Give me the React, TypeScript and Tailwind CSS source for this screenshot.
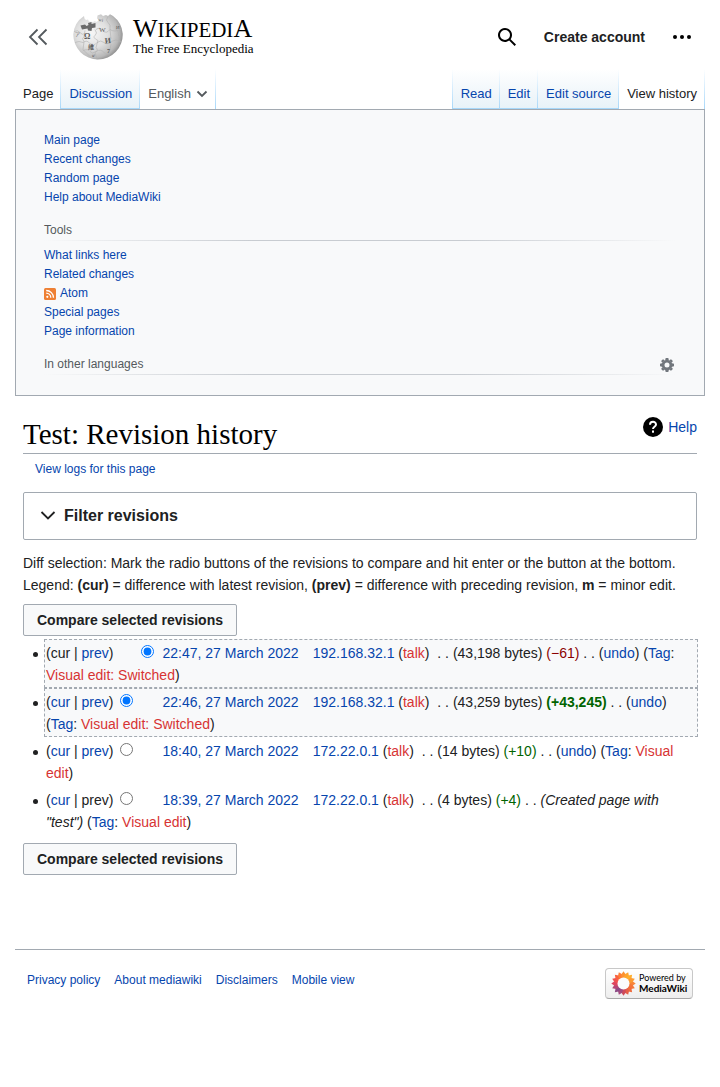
import type { ReactNode } from 'react';

const LINK = 'text-[#0645ad] hover:underline';
const RED = 'text-[#d73333] hover:underline';

function A({ children, className = LINK }: { children: ReactNode; className?: string }) {
  return (
    <a href="#" className={className}>
      {children}
    </a>
  );
}

function Globe() {
  return (
    <svg width="50" height="50" viewBox="0 -1.500 50 50" aria-hidden="true">
      <defs>
        <radialGradient id="globe" cx="38%" cy="42%" r="64%">
          <stop offset="0" stopColor="#f6f6f6" />
          <stop offset="0.5" stopColor="#e0e0e0" />
          <stop offset="0.85" stopColor="#b8b8b8" />
          <stop offset="1" stopColor="#8c8c8c" />
        </radialGradient>
      </defs>
      <path
        d="M11 2.600 L11.500 5 L13 6.500 L15 6 L16 8 L20 8.500 L22 7.500 L23 8.500 L26 7 L24 5 L24.500 2 L28 .8 L30 2.500 L33 1.500 L35 2.500 L37 .8 L40 2.500 A24.700 24.700 0 0 1 49.700 20 A24.800 24.800 0 0 1 25 46 A24.800 24.800 0 0 1 .3 21 A24 24 0 0 1 11 2.600Z"
        fill="url(#globe)"
      />
      <path
        d="M7.500 12 L12 11 L13.500 12.500 L15.500 11.500 L15 9.500 L18.500 8.500 L18.500 10.500 L22.500 9.500 L22.500 14 L19 14.500 L18.500 17.500 L15 17 L14.500 15 L9 16Z"
        fill="#6b6b6b"
      />
      <g fill="none" stroke="#b0b0b0" strokeWidth="0.600">
        <path d="M1 18 Q5 16 7 19 T12 20 M12 17 L11 23 Q8 25 11 28 L10 36 L17 43 M22 16 Q25 20 22 22 T25 27 L23 34 Q26 37 22 39 L24 46 M35 3 Q32 7 35 9 T37 16 L38 25 Q34 28 38 31 L36 42 M45 10 Q41 15 45 18 L47 29" />
        <path d="M2 29 Q6 27 10 29 Q14 26 17 30 T24 29 Q28 26 31 29 T38 28 Q43 25 48 28 M23 16 Q27 13 30 17 T37 16 Q41 19 48 16 M10 37 Q15 35 17 38 T23 38 Q28 35 31 39 T39 38" />
      </g>
      <g fill="#5c5c5c" fontFamily="Liberation Serif, Noto Sans CJK SC, serif" fontWeight="700">
        <text x="11" y="25" fontSize="8">Ω</text>
        <text x="26" y="18" fontSize="7" fontWeight="400">W</text>
        <text x="32" y="30" fontSize="8" transform="rotate(-6 32 30)">И</text>
        <text x="15" y="35" fontSize="6">維</text>
        <text x="34" y="39" fontSize="6">7</text>
        <text x="43" y="15" fontSize="5" fontWeight="400">И</text>
        <text x="2" y="22" fontSize="5" fontWeight="400">ア</text>
        <text x="25" y="7.500" fontSize="5" fontWeight="400" transform="rotate(12 25 7)">wi</text>
        <text x="19" y="43" fontSize="4">ש</text>
      </g>
    </svg>
  );
}

const PETALS = [
  '#f8853a', '#f4763a', '#ee6a3c', '#e75d45', '#cf4a5a', '#a34a7c', '#8d4a86', '#b34778',
  '#dd4560', '#f05050', '#f8613f', '#fd7c35', '#fd9130', '#fea42c', '#ffae2c', '#fc9a32',
];

function PoweredBy() {
  return (
    <a
      href="#"
      className="flex h-[31px] w-22 items-center gap-[3px] rounded-[4px] border border-[#c8c8c8] border-b-[#a8a8a8] bg-linear-to-b from-white to-[#eeeeee] pl-[5px] text-black"
    >
      <svg width="25" height="25" viewBox="-12.500 -12.500 25 25" className="shrink-0" aria-hidden="true">
        {PETALS.map((c, i) => (
          <path key={i} d="M5 -2 L9 -2.200 L12.200 0 L9 2.200 L5 2Z" fill={c} transform={`rotate(${i * 22.5})`} />
        ))}
        <circle r="6" fill="#fbfbfb" />
      </svg>
      <span className="whitespace-nowrap font-[Lato,sans-serif] text-[9px] leading-[10px]">
        Powered by
        <br />
        <b className="text-[10px] font-bold">MediaWiki</b>
      </span>
    </a>
  );
}

function Tab({ label, first = false, kind = 'link' }: { label: string; first?: boolean; kind?: 'link' | 'active' | 'menu' }) {
  const line = 'w-px self-stretch bg-linear-to-t from-[#a7d7f9] to-white';
  const base = 'flex flex-1 items-end gap-[5px] px-2 pb-[5px] text-[13px] leading-5 whitespace-nowrap';
  const fill = 'bg-[linear-gradient(to_top,#a7d7f9_0,#a7d7f9_1px,#e8f2f8_1px,#ffffff_100%)] text-[#0645ad]';
  return (
    <li className="flex h-10">
      {first && <span className={`${line} -ml-px`} />}
      {kind === 'menu' ? (
        <button type="button" className={`${base} text-[#54595d]`}>
          {label}
          <svg width="12" height="20" viewBox="0 0 12 20" fill="none" stroke="#54595d" strokeWidth="1.800" aria-hidden="true">
            <path d="M1.500 7.500 L6 12 L10.500 7.500" />
          </svg>
        </button>
      ) : (
        <a href="#" className={`${base} ${kind === 'active' ? 'text-[#202122]' : fill}`}>
          {label}
        </a>
      )}
      <span className={`${line} -ml-px`} />
    </li>
  );
}

function SideHeading({ children }: { children: ReactNode }) {
  return (
    <>
      <h2 className="flex h-[19px] items-center text-[#54595d]">{children}</h2>
      <div className="h-px bg-[linear-gradient(to_right,rgba(200,204,209,0)_0,#c8ccd1_33%,#c8ccd1_66%,rgba(200,204,209,0)_100%)]" />
    </>
  );
}

function CompareButton() {
  return (
    <button
      type="submit"
      className="block h-8 rounded-[2px] border border-[#a2a9b1] bg-[#f8f9fa] px-[13px] text-sm leading-5 font-bold text-[#202122]"
    >
      Compare selected revisions
    </button>
  );
}

type Revision = {
  cur: boolean;
  prev: boolean;
  radio: 'oldid' | 'diff';
  checked?: boolean;
  date: string;
  user: string;
  size: string;
  delta: string;
  deltaClass: string;
  undo: boolean;
  comment?: string;
  tag: string;
  box: string;
};

const SELECTED = 'border border-dashed border-[#a2a9b1] bg-[#f8f9fa]';
const PLAIN = 'border border-transparent';

const REVISIONS: Revision[] = [
  { cur: false, prev: true, radio: 'diff', checked: true, date: '22:47, 27 March 2022', user: '192.168.32.1', size: '43,198', delta: '−61', deltaClass: 'text-[#8b0000]', undo: true, tag: 'Visual edit: Switched', box: SELECTED },
  { cur: true, prev: true, radio: 'oldid', checked: true, date: '22:46, 27 March 2022', user: '192.168.32.1', size: '43,259', delta: '+43,245', deltaClass: 'font-bold text-[#006400]', undo: true, tag: 'Visual edit: Switched', box: SELECTED },
  { cur: true, prev: true, radio: 'oldid', date: '18:40, 27 March 2022', user: '172.22.0.1', size: '14', delta: '+10', deltaClass: 'text-[#006400]', undo: true, tag: 'Visual edit', box: PLAIN },
  { cur: true, prev: false, radio: 'oldid', date: '18:39, 27 March 2022', user: '172.22.0.1', size: '4', delta: '+4', deltaClass: 'text-[#006400]', undo: false, comment: 'Created page with "test"', tag: 'Visual edit', box: PLAIN },
];

function RevisionRow({ r }: { r: Revision }) {
  return (
    <li
      className={`${r.box} relative pt-[2px] pr-2 pb-px pl-px before:absolute before:top-3 before:-left-3 before:size-[5px] before:rounded-full before:bg-[#202122]`}
    >
      ({r.cur ? <A>cur</A> : 'cur'} | {r.prev ? <A>prev</A> : 'prev'})
      <span className={`inline-block w-[49px] ${r.radio === 'diff' ? 'pl-7' : 'pl-[7px]'}`}>
        <input
          type="radio"
          name={r.radio}
          defaultChecked={r.checked}
          aria-label={`Select revision of ${r.date}`}
          className="block size-[13px]"
        />
      </span>
      <A>{r.date}</A>
      <span className="ml-[14px]">
        <A>{r.user}</A>
      </span>{' '}
      (<A className={RED}>talk</A>)<span className="ml-1"> . . </span>({r.size} bytes){' '}
      <span className={r.deltaClass}>({r.delta})</span> . .{' '}
      {r.undo && (
        <>
          (<A>undo</A>){' '}
        </>
      )}
      {r.comment && <i>({r.comment}) </i>}(<A>Tag</A>: <A className={RED}>{r.tag}</A>)
    </li>
  );
}

export default function App() {
  return (
    <div className="min-h-screen bg-white px-[15px] pb-20 font-['Liberation_Sans',Arial,sans-serif] text-sm leading-[22px] text-[#202122]">
      <header className="flex h-[69px] items-center pt-[5px] pr-[13px] pl-3">
        <button type="button" aria-label="Collapse sidebar">
          <svg width="22" height="20" viewBox="0 0 22 20" fill="none" stroke="#54595d" strokeWidth="1.800">
            <path d="M10.500 2.500 L3 10 L10.500 17.500 M19.500 2.500 L12 10 L19.500 17.500" />
          </svg>
        </button>
        <a href="#" className="ml-6 flex items-center gap-[10px] text-black">
          <Globe />
          <span className="font-['Liberation_Serif',serif] whitespace-nowrap">
            <span className="block text-[26px] leading-[22px]">
              W<span className="text-[21px]">IKIPEDI</span>A
            </span>
            <span className="block text-[13px] leading-4">The Free Encyclopedia</span>
          </span>
        </a>
        <div className="ml-auto flex items-center gap-[27px]">
          <button type="button" aria-label="Search">
            <svg width="20" height="20" viewBox="0 0 20 20" fill="#000">
              <path d="M12.200 13.600a7 7 0 1 1 1.400-1.400l5.400 5.400-1.400 1.400zM3 8a5 5 0 1 0 10 0A5 5 0 0 0 3 8" />
            </svg>
          </button>
          <a href="#" className="font-bold">
            Create account
          </a>
          <button type="button" aria-label="Personal tools">
            <svg width="20" height="20" viewBox="0 0 20 20" fill="#000">
              <circle cx="3" cy="10" r="2" />
              <circle cx="10" cy="10" r="2" />
              <circle cx="17" cy="10" r="2" />
            </svg>
          </button>
        </div>
      </header>

      <nav className="flex justify-between" aria-label="Page views">
        <ul className="flex">
          <Tab label="Page" kind="active" />
          <Tab label="Discussion" />
          <Tab label="English" kind="menu" />
        </ul>
        <ul className="flex">
          <Tab label="Read" first />
          <Tab label="Edit" />
          <Tab label="Edit source" />
          <Tab label="View history" kind="active" />
        </ul>
      </nav>

      <aside className="border border-[#a2a9b1] bg-[#f8f9fa] px-7 pt-[21px] pb-5 text-xs leading-[19px]">
        <ul>
          {['Main page', 'Recent changes', 'Random page', 'Help about MediaWiki'].map((t) => (
            <li key={t}>
              <A>{t}</A>
            </li>
          ))}
        </ul>
        <div className="mt-[14px]">
          <SideHeading>Tools</SideHeading>
          <ul className="mt-[5px]">
            <li>
              <A>What links here</A>
            </li>
            <li>
              <A>Related changes</A>
            </li>
            <li>
              <a href="#" className="inline-flex items-center gap-1 align-top text-[#0645ad]">
                <svg width="12" height="12" viewBox="0 0 12 12" aria-hidden="true">
                  <rect width="12" height="12" rx="1.500" fill="#ee8034" />
                  <circle cx="3.300" cy="8.800" r="1.100" fill="#fff" />
                  <path d="M2.200 5.200a4.600 4.600 0 0 1 4.600 4.600M2.200 2.500a7.300 7.300 0 0 1 7.300 7.300" fill="none" stroke="#fff" strokeWidth="1.300" />
                </svg>
                Atom
              </a>
            </li>
            <li>
              <A>Special pages</A>
            </li>
            <li>
              <A>Page information</A>
            </li>
          </ul>
        </div>
        <div className="mt-[14px]">
          <SideHeading>
            In other languages
            <button type="button" aria-label="Language settings" className="mr-[2px] ml-auto">
              <svg width="14" height="14" viewBox="-7 -7 14 14" fill="none">
                {[0, 45, 90, 135].map((a) => (
                  <path key={a} d="M-1.800 -5 L-1.300 -7 H1.300 L1.800 -5 M-1.800 5 L-1.300 7 H1.300 L1.800 5" fill="#72777d" transform={`rotate(${a})`} />
                ))}
                <circle r="3.900" stroke="#72777d" strokeWidth="2.800" />
              </svg>
            </button>
          </SideHeading>
        </div>
      </aside>

      <main className="px-2 pt-5">
        <div className="flex items-start justify-between border-b border-[#a2a9b1]">
          <h1 className="font-['Liberation_Serif',serif] text-[29px] leading-[37px] text-black">Test: Revision history</h1>
          <a href="#" className="flex items-center gap-[5px] text-[#0645ad]">
            <svg width="20" height="20" viewBox="0 0 20 20" fill="none" aria-hidden="true">
              <circle cx="10" cy="10" r="10" fill="#000" />
              <path d="M7 7.800 C7 3.800 13 3.800 13 7.500 C13 9.800 10 9.800 10 12" stroke="#fff" strokeWidth="2" />
              <rect x="9" y="13.500" width="2" height="2.200" fill="#fff" />
            </svg>
            Help
          </a>
        </div>
        <div className="pt-1 pl-3 text-xs leading-[22px]">
          <A>View logs for this page</A>
        </div>
        <button
          type="button"
          aria-expanded="false"
          className="mt-3 flex h-12 w-full items-center gap-[6px] rounded-[2px] border border-[#a2a9b1] px-[14px] text-base font-bold"
        >
          <svg width="20" height="20" viewBox="0 0 20 20" fill="none" stroke="#202122" strokeWidth="1.800" aria-hidden="true">
            <path d="M3.500 6 L10 12.500 L16.500 6" />
          </svg>
          Filter revisions
        </button>
        <p className="mt-3">
          Diff selection: Mark the radio buttons of the revisions to compare and hit enter or the button at the bottom.
          <br />
          Legend: <b>(cur)</b> = difference with latest revision, <b>(prev)</b> = difference with preceding revision, <b>m</b> = minor edit.
        </p>
        <form className="mt-2" onSubmit={(e) => e.preventDefault()}>
          <CompareButton />
          <ul className="mt-[3px] -mr-px ml-[21px]">
            {REVISIONS.map((r) => (
              <RevisionRow key={r.date} r={r} />
            ))}
          </ul>
          <div className="mt-2">
            <CompareButton />
          </div>
        </form>
      </main>

      <footer className="mt-[74px] flex items-start justify-between border-t border-[#a2a9b1] px-3 pt-[18px] text-xs">
        <ul className="flex flex-wrap gap-x-[14px] pt-1">
          {['Privacy policy', 'About mediawiki', 'Disclaimers', 'Mobile view'].map((t) => (
            <li key={t}>
              <A>{t}</A>
            </li>
          ))}
        </ul>
        <PoweredBy />
      </footer>
    </div>
  );
}
